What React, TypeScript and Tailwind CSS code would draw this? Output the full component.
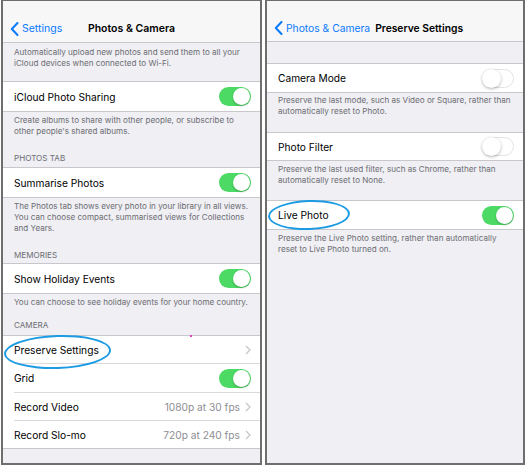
import React from "react";

const FONT = { fontFamily: "Inter, 'Noto Sans', 'Liberation Sans', sans-serif" };

function Toggle({ on }: { on: boolean }) {
  if (on) {
    return (
      <div className="relative w-[32px] h-[19px] rounded-full bg-[#4cd964] shrink-0">
        <div className="absolute right-[1px] top-[1px] w-[17px] h-[17px] rounded-full bg-white shadow-[0_1px_2px_rgba(0,0,0,0.25)]" />
      </div>
    );
  }
  return (
    <div className="relative w-[32px] h-[19px] rounded-full bg-white border border-[#e3e3e8] shrink-0">
      <div className="absolute left-[-1px] top-[-1px] w-[19px] h-[19px] rounded-full bg-white shadow-[0_1px_3px_rgba(0,0,0,0.3)]" />
    </div>
  );
}

function Chevron() {
  return (
    <svg width="6" height="10" viewBox="0 0 6 10" className="shrink-0 ml-[5px]">
      <path d="M1 1l4 4-4 4" fill="none" stroke="#c7c7cc" strokeWidth="1.3" />
    </svg>
  );
}

function BackChevron() {
  return (
    <svg width="9" height="14" viewBox="0 0 9 14" className="shrink-0">
      <path d="M7.5 1L1.8 7l5.7 6" fill="none" stroke="#0a7aff" strokeWidth="2" strokeLinecap="round" strokeLinejoin="round" />
    </svg>
  );
}

function Row({
  label,
  toggle,
  chevron,
  value,
  h = 29,
}: {
  label: string;
  toggle?: boolean;
  chevron?: boolean;
  value?: string;
  h?: number;
}) {
  return (
    <div className="flex items-center bg-white pl-[11px] pr-[9px]" style={{ height: h }}>
      <span className="flex-1 text-[10.2px] leading-[14px] text-black">{label}</span>
      {value && <span className="text-[10.2px] leading-[14px] text-[#8e8e93]">{value}</span>}
      {toggle !== undefined && <Toggle on={toggle} />}
      {chevron && <Chevron />}
    </div>
  );
}

function Sep() {
  return <div className="ml-[11px] h-px bg-[#d9d9de]" />;
}

function Footer({ lines, pt = 3 }: { lines: string[]; pt?: number }) {
  return (
    <div className="px-[11px] text-[8.1px] leading-[11px] text-[#6d6d72]" style={{ paddingTop: pt }}>
      {lines.map((l, i) => (
        <div key={i} className="whitespace-nowrap">{l}</div>
      ))}
    </div>
  );
}

function Header({ text, pt, h }: { text: string; pt: number; h: number }) {
  return (
    <div className="px-[11px] text-[8.1px] leading-[11px] text-[#6d6d72] uppercase" style={{ paddingTop: pt, height: h }}>
      {text}
    </div>
  );
}

function Group({ children }: { children: React.ReactNode }) {
  return <div className="bg-white border-y border-[#c8c7cc]">{children}</div>;
}

export default function App() {
  return (
    <div className="w-[528px] h-[466px] bg-white flex pl-[1px] gap-[3px] relative overflow-hidden" style={FONT}>
      {/* Left panel */}
      <div className="w-[261px] h-[465px] border-x-2 border-b-2 border-t border-[#6e6e6e] bg-[#efeff4] flex flex-col">
        <div className="h-[42px] bg-[#f7f7f8] border-b border-[#c8c7cc] relative flex items-start pt-[21px]">
          <div className="flex items-center gap-[3px] pl-[7px]">
            <BackChevron />
            <span className="text-[10.5px] leading-[14px] text-[#0a7aff]">Settings</span>
          </div>
          <span className="absolute left-0 right-0 top-[21px] text-center text-[10.5px] leading-[14px] font-semibold text-black">
            Photos &amp; Camera
          </span>
        </div>
        <div className="h-[38px]">
          <Footer
            pt={4}
            lines={[
              "Automatically upload new photos and send them to all your",
              "iCloud devices when connected to Wi-Fi.",
            ]}
          />
        </div>
        <Group>
          <Row label="iCloud Photo Sharing" toggle={true} h={29} />
        </Group>
        <Footer
          pt={3}
          lines={[
            "Create albums to share with other people, or subscribe to",
            "other people's shared albums.",
          ]}
        />
        <Header text="Photos Tab" pt={16} h={30} />
        <Group>
          <Row label="Summarise Photos" toggle={true} h={29} />
        </Group>
        <Footer
          pt={3}
          lines={[
            "The Photos tab shows every photo in your library in all views.",
            "You can choose compact, summarised views for Collections",
            "and Years.",
          ]}
        />
        <Header text="Memories" pt={16} h={29} />
        <Group>
          <Row label="Show Holiday Events" toggle={true} h={29} />
        </Group>
        <Footer pt={3} lines={["You can choose to see holiday events for your home country."]} />
        <Header text="Camera" pt={12} h={27} />
        <Group>
          <Row label="Preserve Settings" chevron h={27} />
          <Sep />
          <Row label="Grid" toggle={true} h={28} />
          <Sep />
          <Row label="Record Video" value="1080p at 30 fps" chevron h={27} />
          <Sep />
          <Row label="Record Slo-mo" value="720p at 240 fps" chevron h={27} />
        </Group>
      </div>

      {/* Right panel */}
      <div className="w-[260px] h-[465px] border-x-2 border-b-2 border-t border-[#6e6e6e] bg-[#efeff4] flex flex-col">
        <div className="h-[41px] bg-[#f7f7f8] border-b border-[#c8c7cc] flex items-start pt-[20px] pl-[7px]">
          <div className="flex items-center gap-[3px]">
            <BackChevron />
            <span className="text-[10.3px] leading-[14px] text-[#0a7aff]">Photos &amp; Camera</span>
          </div>
          <span className="ml-[5px] text-[10.3px] leading-[14px] font-semibold text-black">Preserve Settings</span>
        </div>
        <div className="h-[21px]" />
        <Group>
          <Row label="Camera Mode" toggle={false} h={28} />
        </Group>
        <div className="h-[39px]">
          <Footer
            pt={2}
            lines={[
              "Preserve the last mode, such as Video or Square, rather than",
              "automatically reset to Photo.",
            ]}
          />
        </div>
        <Group>
          <Row label="Photo Filter" toggle={false} h={27} />
        </Group>
        <div className="h-[39px]">
          <Footer
            pt={3}
            lines={[
              "Preserve the last used filter, such as Chrome, rather than",
              "automatically reset to None.",
            ]}
          />
        </div>
        <Group>
          <Row label="Live Photo" toggle={true} h={28} />
        </Group>
        <Footer
          pt={3}
          lines={[
            "Preserve the Live Photo setting, rather than automatically",
            "reset to Live Photo turned on.",
          ]}
        />
      </div>

      {/* Annotation ellipses */}
      <div className="absolute left-[4px] top-[335px] w-[107px] h-[34px] rounded-[50%] border-2 border-[#1c9be3] -rotate-[2deg]" />
      <div className="absolute left-[268px] top-[200px] w-[82px] h-[30px] rounded-[50%] border-2 border-[#1c9be3] -rotate-[2deg]" />
      <div className="absolute left-[190px] top-[335px] w-[2px] h-[2px] bg-[#e040c0]" />
    </div>
  );
}
